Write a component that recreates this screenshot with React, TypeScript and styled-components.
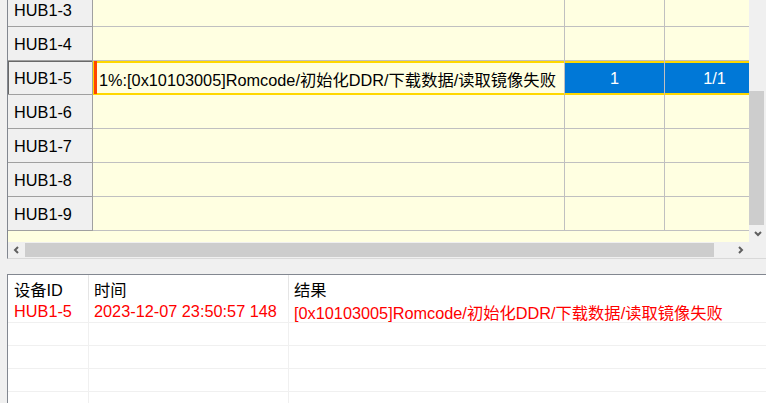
import React from "react";
import styled, { createGlobalStyle, css } from "styled-components";

const GlobalStyle = createGlobalStyle`
  html, body {
    margin: 0;
    padding: 0;
    background: #f0f0f0;
  }
  body {
    font-family: "Liberation Sans", "Noto Sans CJK SC", sans-serif;
    font-size: 16.3px;
  }
  * {
    box-sizing: border-box;
  }
`;

const Window = styled.div`
  width: 766px;
  height: 403px;
  overflow: hidden;
  display: flex;
  flex-direction: column;
  background: #f0f0f0;
`;

const TopPanel = styled.div`
  margin-left: 7px;
  height: 259px;
  border-left: 1px solid #828790;
  border-bottom: 1px solid #d9d9d9;
  display: grid;
  grid-template-columns: 1fr 17px;
  grid-template-rows: 242px 16px;
  flex: none;
`;

const GridViewport = styled.div`
  overflow: hidden;
  background: #ffffe1;
`;

const GridBody = styled.div`
  margin-top: -7px;
  width: max-content;
`;

const Row = styled.div`
  display: flex;
  height: 34px;
`;

const HeaderCell = styled.div<{ $selected?: boolean }>`
  width: 85px;
  background: #f0f0f0;
  border-right: 1px solid #a0a0a0;
  border-bottom: 1px solid #a0a0a0;
  display: flex;
  align-items: center;
  padding: 2px 0 0 6px;
  color: #000;
  ${(p) =>
    p.$selected &&
    css`
      box-shadow: inset 1px 0 0 #696969, inset 0 1px 0 #696969;
    `}
`;

const selectedEdge = css`
  border-bottom-color: #ffd700;
  box-shadow: inset 0 2px 0 #ffd700, inset 0 -1px 0 #ffd700;
`;

const DataCell = styled.div<{ $width: number; $selected?: boolean; $marked?: boolean; $center?: boolean }>`
  width: ${(p) => p.$width}px;
  border-right: 1px solid #c0c0c0;
  border-bottom: 1px solid #c0c0c0;
  display: flex;
  align-items: center;
  justify-content: ${(p) => (p.$center ? "center" : "flex-start")};
  padding: 2px 0 0 6px;
  white-space: nowrap;
  overflow: hidden;
  color: #000;
  ${(p) =>
    p.$selected &&
    css`
      background: #0078d7;
      color: #fff;
      padding-left: 0;
      ${selectedEdge}
    `}
  ${(p) =>
    p.$marked &&
    css`
      border-bottom-color: #ffd700;
      box-shadow: inset 1px 0 0 #ffd700, inset 4px 0 0 #ff4500,
        inset 0 2px 0 #ffd700, inset 0 -1px 0 #ffd700;
    `}
`;

const VScroll = styled.div`
  background: #f0f0f0;
  display: flex;
  flex-direction: column;
  justify-content: flex-end;
`;

const VThumb = styled.div`
  height: 134px;
  width: 15px;
  background: #cdcdcd;
`;

const HScroll = styled.div`
  background: #f0f0f0;
  display: flex;
  align-items: stretch;
`;

const HThumb = styled.div`
  width: 689px;
  margin: 1px 0;
  background: #cdcdcd;
`;

const Spacer = styled.div`
  flex: 1;
`;

const ArrowButton = styled.div<{ $h?: boolean }>`
  width: ${(p) => (p.$h ? "17px" : "100%")};
  height: ${(p) => (p.$h ? "100%" : "17px")};
  display: flex;
  align-items: center;
  justify-content: center;
  flex: none;
`;

const Corner = styled.div`
  background: #f0f0f0;
`;

const BottomPanel = styled.div`
  margin: 15px 0 0 7px;
  flex: 1;
  background: #fff;
  border-top: 1px solid #828790;
  border-left: 1px solid #828790;
`;

const ListRow = styled.div<{ $head?: boolean }>`
  display: grid;
  grid-template-columns: 81px 200px 1fr;
  height: ${(p) => (p.$head ? "25px" : "23px")};
`;

const ListCell = styled.div<{ $head?: boolean; $error?: boolean }>`
  display: flex;
  align-items: center;
  padding-left: 5px;
  white-space: nowrap;
  overflow: hidden;
  color: ${(p) => (p.$error ? "#ff0000" : "#000")};
  border-right: 1px solid ${(p) => (p.$head ? "#e5e5e5" : "#f0f0f0")};
  ${(p) =>
    p.$head
      ? css`
          padding-top: 2px;
        `
      : css`
          border-bottom: 1px solid #f0f0f0;
          padding-top: 1px;
        `}
  &:first-child {
    padding-left: 6px;
  }
  &:last-child {
    border-right: none;
  }
`;

const Chevron = ({ dir }: { dir: "left" | "right" | "down" }) => {
  const points = {
    left: "5,1 2,4 5,7",
    right: "2,1 5,4 2,7",
    down: "1,2 4,5 7,2",
  }[dir];
  const w = dir === "down" ? 8 : 7;
  const h = dir === "down" ? 7 : 8;
  return (
    <svg width={w} height={h} viewBox={`0 0 ${w} ${h}`}>
      <polyline points={points} fill="none" stroke="#606060" strokeWidth="2" />
    </svg>
  );
};

const hubs = ["HUB1-3", "HUB1-4", "HUB1-5", "HUB1-6", "HUB1-7", "HUB1-8", "HUB1-9"];
const message = "[0x10103005]Romcode/初始化DDR/下载数据/读取镜像失败";

export default function App() {
  return (
    <>
      <GlobalStyle />
      <Window>
        <TopPanel>
          <GridViewport>
            <GridBody>
              {hubs.map((hub) => {
                const active = hub === "HUB1-5";
                return (
                  <Row key={hub}>
                    <HeaderCell $selected={active}>{hub}</HeaderCell>
                    <DataCell $width={472} $marked={active}>
                      {active ? `1%:${message}` : ""}
                    </DataCell>
                    <DataCell $width={100} $selected={active} $center>
                      {active ? "1" : ""}
                    </DataCell>
                    <DataCell $width={100} $selected={active} $center>
                      {active ? "1/1" : ""}
                    </DataCell>
                  </Row>
                );
              })}
            </GridBody>
          </GridViewport>
          <VScroll>
            <VThumb />
            <ArrowButton>
              <Chevron dir="down" />
            </ArrowButton>
          </VScroll>
          <HScroll>
            <ArrowButton $h>
              <Chevron dir="left" />
            </ArrowButton>
            <HThumb />
            <Spacer />
            <ArrowButton $h>
              <Chevron dir="right" />
            </ArrowButton>
          </HScroll>
          <Corner />
        </TopPanel>
        <BottomPanel>
          <ListRow $head>
            <ListCell $head>设备ID</ListCell>
            <ListCell $head>时间</ListCell>
            <ListCell $head>结果</ListCell>
          </ListRow>
          <ListRow>
            <ListCell $error>HUB1-5</ListCell>
            <ListCell $error>2023-12-07 23:50:57 148</ListCell>
            <ListCell $error>{message}</ListCell>
          </ListRow>
          {[0, 1, 2, 3].map((i) => (
            <ListRow key={i}>
              <ListCell />
              <ListCell />
              <ListCell />
            </ListRow>
          ))}
        </BottomPanel>
      </Window>
    </>
  );
}
